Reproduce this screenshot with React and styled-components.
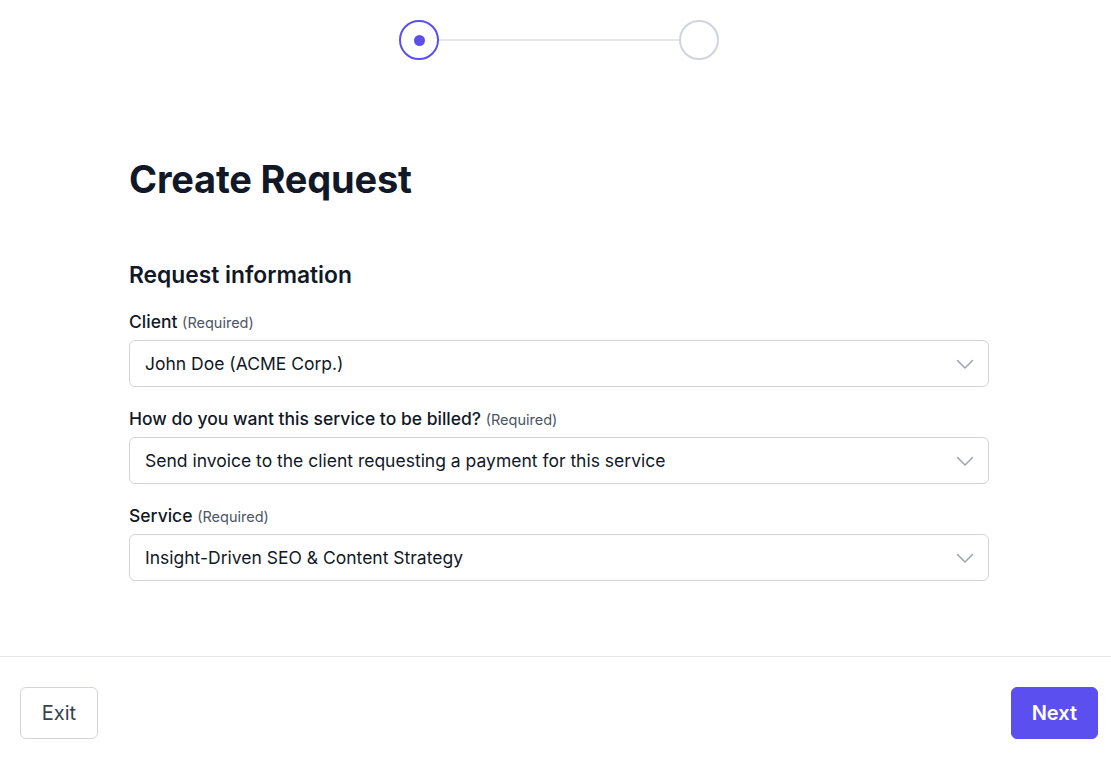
import React from 'react'
import styled, { createGlobalStyle } from 'styled-components'

const GlobalStyle = createGlobalStyle`
body{
    margin: 0;
    background: #ffffff;
    font-family: Inter, "Noto Sans", sans-serif;
    color: #111827;
}
`

const fields = [
    { label: 'Client', value: 'John Doe (ACME Corp.)' },
    { label: 'How do you want this service to be billed?', value: 'Send invoice to the client requesting a payment for this service' },
    { label: 'Service', value: 'Insight-Driven SEO & Content Strategy' },
]

const Chevron = () => (
    <svg width="24" height="24" viewBox="0 0 24 24" fill="none" stroke="#9ca3af" strokeWidth="1.5" strokeLinecap="round" strokeLinejoin="round">
        <path d="M4.5 8.5l7.5 7.5 7.5-7.5" />
    </svg>
)

const App = () => {
    return (
        <>
            <GlobalStyle />
            <Page>
                <Stepper>
                    <Step active><Dot /></Step>
                    <StepLine />
                    <Step />
                </Stepper>

                <Main>
                    <Title>Create Request</Title>
                    <SectionTitle>Request information</SectionTitle>
                    <Fields>
                        {fields.map((f) => (
                            <Field key={f.label}>
                                <Label>
                                    {f.label} <Req>(Required)</Req>
                                </Label>
                                <Select>
                                    <span>{f.value}</span>
                                    <Chevron />
                                </Select>
                            </Field>
                        ))}
                    </Fields>
                </Main>

                <Footer>
                    <Button>Exit</Button>
                    <Button primary>Next</Button>
                </Footer>
            </Page>
        </>
    )
}

const Page = styled.div`
width: 100%;
height: 759px;
display: flex;
flex-direction: column;
`
const Stepper = styled.div`
display: flex;
align-items: center;
justify-content: center;
padding-top: 20px;
padding-left: 7px;
`
const Step = styled.div`
width: 40px;
height: 40px;
box-sizing: border-box;
border-radius: 50%;
border: 2px solid ${(p) => (p.active ? '#5b50ef' : '#d1d5db')};
display: flex;
align-items: center;
justify-content: center;
`
const Dot = styled.div`
width: 11px;
height: 11px;
border-radius: 50%;
background: #5b50ef;
`
const StepLine = styled.div`
width: 240px;
height: 2px;
background: #e5e7eb;
`
const Main = styled.div`
flex: 1;
width: 860px;
margin-left: 129px;
`
const Title = styled.h1`
margin: 0;
margin-top: 96px;
font-size: 38px;
line-height: 46px;
font-weight: 700;
color: #111827;
letter-spacing: -0.2px;
`
const SectionTitle = styled.h2`
margin: 0;
margin-top: 59px;
font-size: 22.8px;
line-height: 28px;
font-weight: 600;
color: #111827;
`
const Fields = styled.div`
margin-top: 21px;
display: flex;
flex-direction: column;
gap: 20px;
`
const Field = styled.div`
display: flex;
flex-direction: column;
gap: 5px;
`
const Label = styled.label`
font-size: 17.5px;
line-height: 24px;
font-weight: 500;
color: #111827;
`
const Req = styled.span`
font-size: 14.5px;
font-weight: 400;
color: #4b5563;
`
const Select = styled.div`
height: 47px;
box-sizing: border-box;
border: 1px solid #d1d5db;
border-radius: 6px;
padding: 0 11px 0 15px;
display: flex;
align-items: center;
justify-content: space-between;
font-size: 17.5px;
color: #111827;
`
const Footer = styled.div`
border-top: 1px solid #e5e7eb;
padding: 30px 13px 20px 20px;
display: flex;
justify-content: space-between;
align-items: center;
`
const Button = styled.button`
height: 52px;
min-width: 78px;
padding: 0 20px;
border-radius: 6px;
font-family: Inter, "Noto Sans", sans-serif;
font-size: 20px;
cursor: pointer;
border: 1px solid ${(p) => (p.primary ? '#5b50ef' : '#d1d5db')};
background: ${(p) => (p.primary ? '#5b50ef' : '#ffffff')};
color: ${(p) => (p.primary ? '#ffffff' : '#374151')};
font-weight: ${(p) => (p.primary ? 600 : 400)};
`

export default App
